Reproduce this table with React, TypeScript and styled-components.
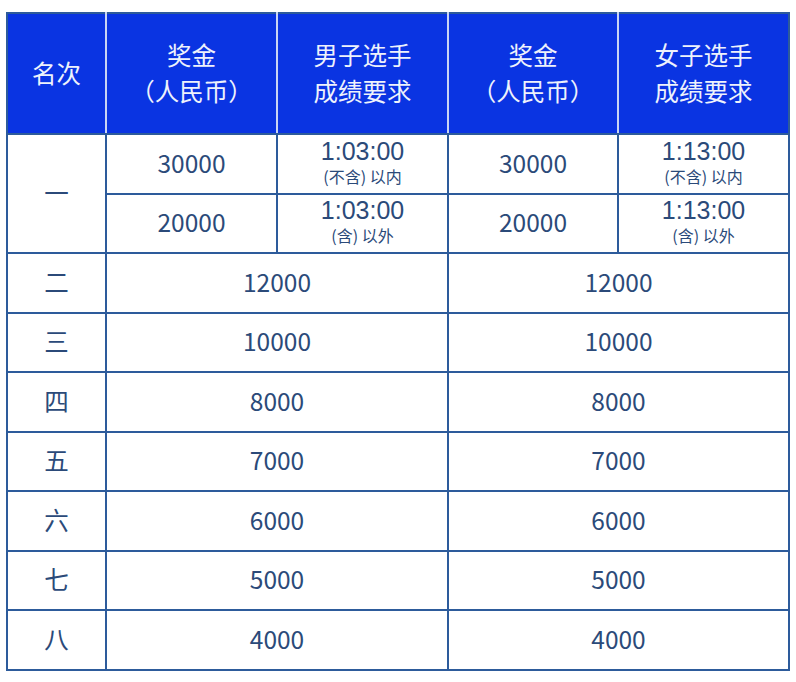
import React from "react";
import styled, {createGlobalStyle} from "styled-components";

const Global = createGlobalStyle`
  html, body {
    margin: 0;
    padding: 0;
    background: #ffffff;
  }
  body {
    font-family: "Noto Sans CJK SC", "Noto Sans", sans-serif;
  }
`;

const border = '#2d5b9b';
const headBlue = '#0a34e2';
const textColor = '#2b4a79';

interface TimeReq {
  time: string;
  note: string;
}

interface TopRow {
  menPrize: string;
  men: TimeReq;
  womenPrize: string;
  women: TimeReq;
}

const firstPlace: TopRow[] = [
  {
    menPrize: '30000',
    men: {time: '1:03:00', note: '(不含) 以内'},
    womenPrize: '30000',
    women: {time: '1:13:00', note: '(不含) 以内'},
  },
  {
    menPrize: '20000',
    men: {time: '1:03:00', note: '(含) 以外'},
    womenPrize: '20000',
    women: {time: '1:13:00', note: '(含) 以外'},
  },
];

const otherPlaces = [
  {rank: '二', prize: '12000'},
  {rank: '三', prize: '10000'},
  {rank: '四', prize: '8000'},
  {rank: '五', prize: '7000'},
  {rank: '六', prize: '6000'},
  {rank: '七', prize: '5000'},
  {rank: '八', prize: '4000'},
];

const colWidths = [99, 171, 171, 170, 171];

export default function App() {
  return <Page>
    <Global/>
    <Table>
      <colgroup>
        {colWidths.map((w, i) => <col key={i} style={{width: w}}/>)}
      </colgroup>
      <thead>
      <HeadRow>
        <HeadCell>名次</HeadCell>
        <HeadCell>奖金<br/>（人民币）</HeadCell>
        <HeadCell>男子选手<br/>成绩要求</HeadCell>
        <HeadCell>奖金<br/>（人民币）</HeadCell>
        <HeadCell $last>女子选手<br/>成绩要求</HeadCell>
      </HeadRow>
      </thead>
      <tbody>
      {firstPlace.map((row, index) => (
        <BodyRow key={index}>
          {index === 0 && <Cell rowSpan={2}>一</Cell>}
          <Cell>{row.menPrize}</Cell>
          <Cell>
            <Time>{row.men.time}</Time>
            <Note>{row.men.note}</Note>
          </Cell>
          <Cell>{row.womenPrize}</Cell>
          <Cell>
            <Time>{row.women.time}</Time>
            <Note>{row.women.note}</Note>
          </Cell>
        </BodyRow>
      ))}
      {otherPlaces.map(item => (
        <BodyRow key={item.rank}>
          <Cell>{item.rank}</Cell>
          <Cell colSpan={2}>{item.prize}</Cell>
          <Cell colSpan={2}>{item.prize}</Cell>
        </BodyRow>
      ))}
      </tbody>
    </Table>
  </Page>
}

const Page = styled('div')`
  padding: 12px 0 0 6px;
`;

const Table = styled('table')`
  width: 782px;
  table-layout: fixed;
  border-collapse: collapse;
  border: 2px solid ${border};
`;

const HeadRow = styled('tr')`
  height: 121px;
  background-color: ${headBlue};
`;

const HeadCell = styled('th')<{ $last?: boolean }>`
  padding: 0 0 2px;
  color: #eef2fc;
  font-weight: 400;
  font-size: 24.5px;
  line-height: 36px;
  text-align: center;
  vertical-align: middle;
  border-top: 2px solid ${border};
  border-bottom: 2px solid ${border};
  border-right: ${p => p.$last ? `2px solid ${border}` : '2px solid #c9d5f3'};
`;

const BodyRow = styled('tr')`
  height: 59.5px;
`;

const Cell = styled('td')`
  padding: 0 0 3px;
  border: 2px solid ${border};
  color: ${textColor};
  font-size: 24.5px;
  text-align: center;
  vertical-align: middle;
`;

const Time = styled('div')`
  font-family: "Liberation Sans", Arial, sans-serif;
  font-size: 25px;
  line-height: 28px;
`;

const Note = styled('div')`
  font-size: 16px;
  line-height: 23px;
`;
